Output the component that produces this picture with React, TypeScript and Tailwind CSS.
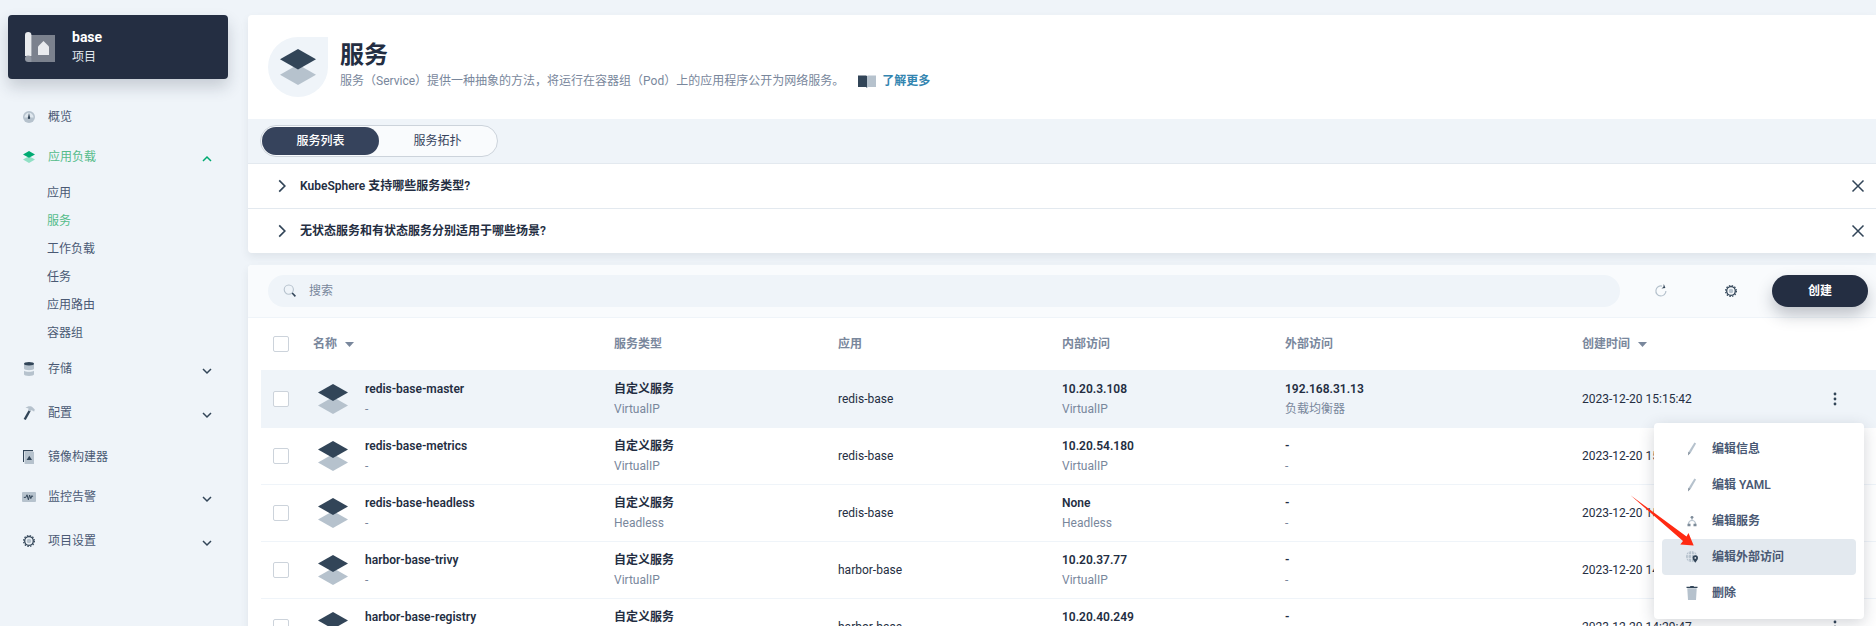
import type { ReactNode } from "react";

type IconProps = { className?: string };

const DARK = "#324558";
const LIGHT = "#b6c2cd";

function LayersIcon({ size, green }: { size: number; green?: boolean }) {
  return (
    <svg width={size} height={size} viewBox="0 0 30 30" className="shrink-0">
      <path d="M15 13l15 8.5L15 30 0 21.5z" fill={green ? "#90e0c5" : LIGHT} />
      <path d="M15 0l15 8.5L15 17 0 8.5z" fill={green ? "#00aa72" : DARK} />
    </svg>
  );
}

function ProjectIcon() {
  return (
    <svg width="30" height="30" viewBox="0 0 30 30" className="shrink-0">
      <path d="M3 3h27v27H3z" fill="#fff" fillOpacity=".4" />
      <path d="M0 3.2a3.2 3.2 0 0 1 6.4 0V24H0z" fill="#e9ebee" />
      <path d="M0 26.600a3.200 3.200 0 0 1 6.400 0V30H3.200A3.300 3.300 0 0 1 0 26.600z" fill="#9197a2" />
      <path d="M18.500 9l5.500 5.600V23H13v-8.400z" fill="#e9ebee" />
    </svg>
  );
}

function GaugeIcon() {
  return (
    <svg width="14" height="14" viewBox="0 0 14 14">
      <circle cx="7" cy="7" r="6" fill={LIGHT} />
      <path d="M2.400 7.400a4.600 4.600 0 0 1 9.200 0z" fill="#dfe7ee" />
      <path d="M7 3l1 4.200a1.200 1.200 0 1 1-2 0z" fill={DARK} />
    </svg>
  );
}

function StorageIcon() {
  return (
    <svg width="14" height="14" viewBox="0 0 14 14">
      <path d="M2 2v4.600c0 1 2.200 1.700 5 1.700s5-.7 5-1.700V2z" fill={LIGHT} />
      <path d="M2 8.700c1 .8 2.800 1.100 5 1.100s4-.3 5-1.100v3.600c0 1-2.200 1.700-5 1.700s-5-.7-5-1.700z" fill={LIGHT} />
      <ellipse cx="7" cy="1.800" rx="5" ry="1.700" fill={DARK} />
    </svg>
  );
}

function HammerIcon() {
  return (
    <svg width="14" height="14" viewBox="0 0 14 14">
      <path d="M6.600 4.200l2 1.100L3.800 14 1.600 13z" fill={DARK} />
      <path d="M3.500 2C5.800-.2 9.300-.2 11 1.800l1.800 1.700-.6 1.900-1.400-.5-.9-1-1.800 1.600-2-1.400.6-1.400C6 1.900 4.900 1.800 3.500 2z" fill={LIGHT} />
    </svg>
  );
}

function ImageBuilderIcon() {
  return (
    <svg width="14" height="14" viewBox="0 0 14 14">
      <path d="M1 0h10v1.200H2V12H1z" fill={DARK} />
      <path d="M2.600 1.800H12V14H2.600z" fill={LIGHT} />
      <path d="M7.300 5.800L10 10H4.600z" fill={DARK} />
    </svg>
  );
}

function MonitorIcon() {
  return (
    <svg width="14" height="14" viewBox="0 0 14 14">
      <rect y="2" width="14" height="10" rx="1" fill={LIGHT} />
      <path d="M1.800 7.400h2L5 4.800l1.400 5L7.600 5l1.200 3.600L10 5.600l.8 1.200" fill="none" stroke={DARK} />
    </svg>
  );
}

function GearIcon({ className }: IconProps) {
  return (
    <svg width="14" height="14" viewBox="0 0 14 14" className={className}>
      <circle cx="7" cy="7" r="2.300" fill={LIGHT} />
      <circle cx="7" cy="7" r="4.300" fill="none" stroke={DARK} strokeWidth="1.300" />
      <circle cx="7" cy="7" r="5.400" fill="none" stroke={DARK} strokeWidth="1.200" strokeDasharray="1.500 1.327" />
    </svg>
  );
}

function Chevron({ className }: IconProps) {
  return (
    <svg width="10" height="10" viewBox="0 0 10 10" fill="none" stroke="currentColor" strokeWidth="1.500" className={className}>
      <path d="M1 3l4 4 4-4" />
    </svg>
  );
}

function SearchIcon() {
  return (
    <svg width="14" height="14" viewBox="0 0 14 14" fill="none" className="shrink-0">
      <circle cx="5.800" cy="5.600" r="4.600" stroke={LIGHT} strokeWidth="1.100" />
      <path d="M9.200 9l3.200 3.400" stroke={DARK} strokeWidth="1.600" />
    </svg>
  );
}

function RefreshIcon() {
  return (
    <svg width="14" height="14" viewBox="0 0 14 14" fill="none">
      <path d="M8 2.100A5 5 0 1 0 11.900 7" stroke={LIGHT} strokeWidth="1.200" />
      <path d="M9.800 0l1.600 3.900-4 .7 2-1.600z" fill={DARK} />
    </svg>
  );
}

function CloseIcon() {
  return (
    <svg width="14" height="14" viewBox="0 0 14 14" stroke={DARK} strokeWidth="1.500">
      <path d="M1.500 1.500l11 11M12.500 1.500l-11 11" />
    </svg>
  );
}

function BookIcon() {
  return (
    <svg width="18" height="13" viewBox="0 0 18 13">
      <path d="M0 .5h8l1 .5v12l-1-1H0z" fill={DARK} />
      <path d="M18 .5h-8L9 1v12l1-1h8z" fill={LIGHT} />
    </svg>
  );
}

function MoreIcon() {
  return (
    <svg width="4" height="14" viewBox="0 0 4 14" fill={DARK}>
      <circle cx="2" cy="2" r="1.400" />
      <circle cx="2" cy="7" r="1.400" />
      <circle cx="2" cy="12" r="1.400" />
    </svg>
  );
}

function PenIcon() {
  return (
    <svg width="16" height="16" viewBox="0 0 16 16">
      <path d="M10.400 1.600l1.700.9-5.600 9.700-2.100-1z" fill={LIGHT} />
      <path d="M4.400 10.800l2 1.100L4 14.600z" fill="#7d8b99" />
    </svg>
  );
}

function ServiceIcon() {
  return (
    <svg width="16" height="16" viewBox="0 0 16 16">
      <path d="M8 5v2.500M4.500 11.500C4.500 9 6 7.500 8 7.500s3.500 1.500 3.500 4" stroke={LIGHT} strokeWidth="1.200" fill="none" />
      <circle cx="8" cy="4.300" r="1.400" fill="#7d8b99" />
      <path d="M3.500 10.800h3v2.400h-3zM9.500 10.800h3v2.400h-3z" fill="#7d8b99" />
    </svg>
  );
}

function GlobePinIcon() {
  return (
    <svg width="16" height="16" viewBox="0 0 16 16">
      <circle cx="7.500" cy="7.500" r="5.500" fill={LIGHT} />
      <path d="M2 5.600h11M2 9.400h11M7.500 2v11M5 2.500c-1 3-1 7 0 10M10 2.500c1 3 1 7 0 10" stroke="#e3e9ef" strokeWidth=".8" fill="none" />
      <path d="M11.300 6.200a2.700 2.700 0 0 1 2.700 2.700c0 1.700-1.500 3-2.700 4.900-1.200-1.900-2.700-3.200-2.700-4.900a2.700 2.700 0 0 1 2.700-2.700z" fill={DARK} />
      <circle cx="11.300" cy="8.900" r=".9" fill="#e3e9ef" />
    </svg>
  );
}

function TrashIcon() {
  return (
    <svg width="16" height="16" viewBox="0 0 16 16">
      <path d="M3.300 3.300h9.400L12 15H4z" fill={LIGHT} />
      <path d="M2.500 1.800h3.700V1h3.600v.8h3.700V3h-11z" fill={DARK} />
    </svg>
  );
}

type NavItem = { label: string; icon: ReactNode; expandable?: boolean; children?: string[] };

const navItems: NavItem[] = [
  { label: "概览", icon: <GaugeIcon /> },
  {
    label: "应用负载",
    icon: <LayersIcon size={12} green />,
    expandable: true,
    children: ["应用", "服务", "工作负载", "任务", "应用路由", "容器组"],
  },
  { label: "存储", icon: <StorageIcon />, expandable: true },
  { label: "配置", icon: <HammerIcon />, expandable: true },
  { label: "镜像构建器", icon: <ImageBuilderIcon /> },
  { label: "监控告警", icon: <MonitorIcon />, expandable: true },
  { label: "项目设置", icon: <GearIcon />, expandable: true },
];

const services = [
  { name: "redis-base-master", type: "VirtualIP", app: "redis-base", internal: "10.20.3.108", external: "192.168.31.13", externalType: "负载均衡器", time: "2023-12-20 15:15:42" },
  { name: "redis-base-metrics", type: "VirtualIP", app: "redis-base", internal: "10.20.54.180", external: "-", externalType: "-", time: "2023-12-20 15:15:42" },
  { name: "redis-base-headless", type: "Headless", app: "redis-base", internal: "None", external: "-", externalType: "-", time: "2023-12-20 15:15:42" },
  { name: "harbor-base-trivy", type: "VirtualIP", app: "harbor-base", internal: "10.20.37.77", external: "-", externalType: "-", time: "2023-12-20 14:29:47" },
  { name: "harbor-base-registry", type: "VirtualIP", app: "harbor-base", internal: "10.20.40.249", external: "-", externalType: "-", time: "2023-12-20 14:29:47" },
];

const menuItems = [
  { label: "编辑信息", icon: <PenIcon /> },
  { label: "编辑 YAML", icon: <PenIcon /> },
  { label: "编辑服务", icon: <ServiceIcon /> },
  { label: "编辑外部访问", icon: <GlobePinIcon />, active: true },
  { label: "删除", icon: <TrashIcon /> },
];

function Sidebar() {
  return (
    <aside className="w-[248px] shrink-0 pl-2 pr-5 pt-[15px]">
      <div className="flex h-16 items-center gap-[17px] rounded bg-[#242e42] px-[17px] shadow-[0_8px_16px_0_rgba(36,46,66,0.2)]">
        <ProjectIcon />
        <div className="leading-5 text-white">
          <div className="text-sm leading-5 font-bold">base</div>
          <div className="text-[#e3e9ef]">项目</div>
        </div>
      </div>
      <nav className="mt-4 text-[#4a5974]">
        <ul>
          {navItems.map((item) => (
            <li key={item.label}>
              <a
                href="#"
                className={
                  "flex items-center pl-3.5 pr-4 leading-5 pt-3 " +
                  (item.expandable ? "pb-3 " : "pb-2 ") +
                  (item.children ? "text-[#55bc8a]" : "")
                }
              >
                <span className="flex w-3.5 justify-center">{item.icon}</span>
                <span className="ml-3 grow">{item.label}</span>
                {item.expandable && (
                  <Chevron className={item.children ? "mt-1 rotate-180 text-[#00aa72]" : "mt-1 text-[#324558]"} />
                )}
              </a>
              {item.children && (
                <ul className="pl-[39px] leading-7">
                  {item.children.map((child) => (
                    <li key={child}>
                      <a href="#" className={child === "服务" ? "text-[#55bc8a]" : ""}>
                        {child}
                      </a>
                    </li>
                  ))}
                </ul>
              )}
            </li>
          ))}
        </ul>
      </nav>
    </aside>
  );
}

function Faq({ title }: { title: string }) {
  return (
    <div className="flex h-[45px] items-center border-t border-[#e3e9ef] pl-[27px] pr-[11px] font-semibold text-[#242e42]">
      <button className="flex grow items-center gap-[11px] text-left">
        <Chevron className="h-3.5 w-3.5 -rotate-90 stroke-[1.2] text-[#324558]" />
        <span>{title}</span>
      </button>
      <button aria-label="关闭">
        <CloseIcon />
      </button>
    </div>
  );
}

function Banner() {
  return (
    <section className="overflow-hidden rounded-l bg-white shadow-[0_4px_8px_0_rgba(36,46,66,0.08)]">
      <div className="flex h-26 items-center gap-3 px-5">
        <div className="flex h-15 w-15 items-center justify-center rounded-full rounded-tr-none bg-[#eff4f9]">
          <LayersIcon size={36} />
        </div>
        <div className="pb-1">
          <h1 className="text-2xl leading-8 font-semibold text-[#242e42]">服务</h1>
          <p className="flex items-center leading-5 text-[#79879c]">
            服务（Service）提供一种抽象的方法，将运行在容器组（Pod）上的应用程序公开为网络服务。
            <a href="#" className="ml-3.5 flex items-center gap-1.5 font-semibold text-[#3385b0]">
              <BookIcon />
              了解更多
            </a>
          </p>
        </div>
      </div>
      <div className="flex h-11 items-center bg-[#eff4f9] px-3">
        <div className="flex h-8 rounded-full border border-[#ccd3db] bg-[#f9fbfd] p-px">
          <button className="w-[117px] rounded-full bg-[#36435c] font-medium text-white">服务列表</button>
          <button className="w-[117px] rounded-full text-[#36435c]">服务拓扑</button>
        </div>
      </div>
      <Faq title="KubeSphere 支持哪些服务类型?" />
      <Faq title="无状态服务和有状态服务分别适用于哪些场景?" />
    </section>
  );
}

function Checkbox({ label }: { label: string }) {
  return (
    <input
      type="checkbox"
      aria-label={label}
      className="block h-4 w-4 appearance-none rounded-xs border border-[#ccd3db] bg-white"
    />
  );
}

function SortArrow() {
  return (
    <svg width="9" height="5" viewBox="0 0 9 5" fill="#79879c">
      <path d="M0 0h9L4.500 5z" />
    </svg>
  );
}

function TwoLines({ title, text }: { title: string; text: string }) {
  return (
    <div className="leading-5">
      <div className="font-semibold text-[#242e42]">{title}</div>
      <div className="text-[#79879c]">{text}</div>
    </div>
  );
}

function ActionMenu() {
  return (
    <div className="absolute top-[52px] right-3 z-10 w-[210px] rounded bg-white p-2 shadow-[0_4px_16px_0_rgba(36,46,66,0.2)]">
      {menuItems.map((item) => (
        <button
          key={item.label}
          className={
            "flex h-9 w-full items-center gap-3 rounded px-[22px] text-left font-semibold text-[#4a5974] " +
            (item.active ? "bg-[#e3e9ef]" : "")
          }
        >
          {item.icon}
          {item.label}
        </button>
      ))}
      <svg width="64" height="52" viewBox="0 0 64 52" fill="#ff2a12" className="absolute top-[72px] -left-6">
        <path d="M.5.3L56.500 41.500 58.500 38 63.700 50.600 50.300 49.500 53 46z" />
      </svg>
    </div>
  );
}

function ServiceTable() {
  return (
    <table className="w-full table-fixed border-separate border-spacing-0 text-left">
      <colgroup>
        <col className="w-10" />
        <col className="w-[301px]" />
        <col className="w-56" />
        <col className="w-56" />
        <col className="w-[223px]" />
        <col className="w-[297px]" />
        <col />
        <col className="w-[82px]" />
      </colgroup>
      <thead>
        <tr className="text-[#79879c] *:h-[53px] *:border-b *:border-[#eff4f9] *:px-3 *:font-semibold">
          <th>
            <Checkbox label="全选" />
          </th>
          <th>
            <button className="flex items-center gap-2">
              名称
              <SortArrow />
            </button>
          </th>
          <th>服务类型</th>
          <th>应用</th>
          <th>内部访问</th>
          <th>外部访问</th>
          <th>
            <button className="flex items-center gap-2">
              创建时间
              <SortArrow />
            </button>
          </th>
          <th></th>
        </tr>
      </thead>
      <tbody>
        {services.map((service, index) => (
          <tr
            key={service.name}
            className={
              "text-[#242e42] *:h-[57px] *:border-b *:border-[#eff4f9] *:px-3 " + (index === 0 ? "bg-[#eff4f9]" : "")
            }
          >
            <td>
              <Checkbox label={service.name} />
            </td>
            <td>
              <div className="flex items-center gap-[17px] pl-[5px]">
                <LayersIcon size={30} />
                <TwoLines title={service.name} text="-" />
              </div>
            </td>
            <td>
              <TwoLines title="自定义服务" text={service.type} />
            </td>
            <td>{service.app}</td>
            <td>
              <TwoLines title={service.internal} text={service.type} />
            </td>
            <td>
              <TwoLines title={service.external} text={service.externalType} />
            </td>
            <td>{service.time}</td>
            <td className="relative">
              <button aria-label="更多操作" className="mx-auto block">
                <MoreIcon />
              </button>
              {index === 0 && <ActionMenu />}
            </td>
          </tr>
        ))}
      </tbody>
    </table>
  );
}

export default function App() {
  return (
    <div className="flex h-screen overflow-hidden bg-[#eff4f9] font-['Roboto','Noto_Sans_CJK_SC',sans-serif] text-xs">
      <Sidebar />
      <main className="min-w-0 grow pt-[15px]">
        <Banner />
        <section className="mt-3 rounded-l bg-white shadow-[0_4px_8px_0_rgba(36,46,66,0.08)]">
          <div className="flex h-[53px] items-center gap-3 rounded-tl border-b border-[#eff4f9] bg-[#f9fbfd] pl-5 pr-2">
            <label className="flex h-8 grow items-center gap-3 rounded-full bg-[#eff4f9] px-[15px]">
              <SearchIcon />
              <input
                type="text"
                aria-label="搜索"
                placeholder="搜索"
                className="grow bg-transparent outline-none placeholder:text-[#79879c]"
              />
            </label>
            <button aria-label="刷新" className="flex h-8 w-[58px] items-center justify-center">
              <RefreshIcon />
            </button>
            <button aria-label="设置" className="flex h-8 w-[58px] items-center justify-center">
              <GearIcon />
            </button>
            <button className="h-8 w-24 rounded-full bg-[#242e42] font-semibold text-white shadow-[0_8px_16px_0_rgba(36,46,66,0.28)]">
              创建
            </button>
          </div>
          <div className="pl-[13px]">
            <ServiceTable />
          </div>
        </section>
      </main>
    </div>
  );
}
